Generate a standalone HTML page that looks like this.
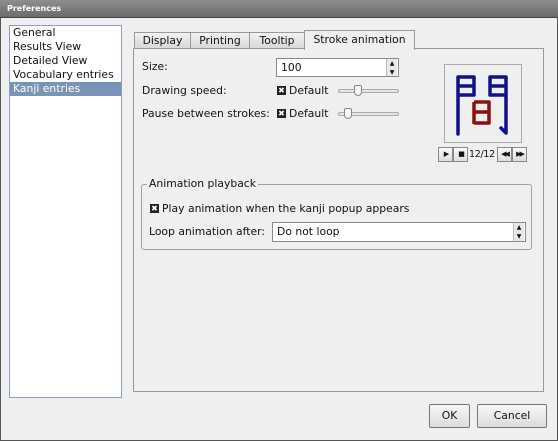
<!DOCTYPE html>
<html><head><style>
*{box-sizing:border-box;margin:0;padding:0}
body{width:558px;height:441px;background:#efefef;font-family:"DejaVu Sans","Liberation Sans",sans-serif;font-size:10.8px;color:#111;position:relative;overflow:hidden}
.a{position:absolute;white-space:nowrap}
.title{left:0;top:0;width:558px;height:18px;background:linear-gradient(#8e8e8e,#6b6b6b);color:#fff;font-weight:bold;font-size:8px;padding:4px 0 0 7px;border-bottom:1px solid #444}
.frame{left:0;top:0;width:558px;height:441px;border:1px solid #555}
.list{left:9px;top:25px;width:113px;height:373px;background:#fff;border:1px solid #8aa0bd}
.list div{height:14px;line-height:14px;padding-left:3px;font-size:10.8px}
.sel{background:#7a94b8;color:#fff}
.panel{left:133px;top:48px;width:411px;height:344px;border:1px solid #9a9a9a;background:#efefef}
.tab{top:32px;height:17px;border:1px solid #9a9a9a;background:linear-gradient(#f2f2f2,#d8d8d8);text-align:center;line-height:15px;font-size:10.8px}
.field{background:#fff;border:1px solid #8a8a8a;padding-left:4px;font-size:10.8px}
.chk{width:9px;height:9px;background:#222;color:#fff;font-size:8px;line-height:9px;text-align:center;font-weight:bold}
.spin{width:11px;border-left:1px solid #bbb;background:#e8e8e8;font-size:6px;text-align:center;line-height:9px}
.btn{border:1px solid #777;background:linear-gradient(#f7f7f7,#dcdcdc);border-radius:2px;text-align:center;font-size:10.8px}
.sb{width:15px;height:15px;border:1px solid #888;background:linear-gradient(#fafafa,#ddd);font-size:7px;text-align:center;line-height:13px;letter-spacing:-2px}
</style></head><body>
<div class="a frame"></div>
<div class="a title">Preferences</div>
<div class="a list"><div>General</div><div>Results View</div><div>Detailed View</div><div>Vocabulary entries</div><div class="sel">Kanji entries</div></div>
<div class="a panel"></div>
<div class="a tab" style="left:134px;width:57px">Display</div>
<div class="a tab" style="left:190px;width:60px">Printing</div>
<div class="a tab" style="left:249px;width:56px">Tooltip</div>
<div class="a tab" style="left:304px;top:30px;width:111px;height:20px;background:#efefef;border-bottom:none;line-height:18px">Stroke animation</div>
<div class="a" style="left:142px;top:60px">Size:</div>
<div class="a field" style="left:276px;top:58px;width:123px;height:19px;line-height:17px">100</div>
<div class="a spin" style="left:386px;top:59px;height:17px">▲<br>▼</div>
<div class="a" style="left:142px;top:84px">Drawing speed:</div>
<div class="a chk" style="left:277px;top:86px">✖</div>
<div class="a" style="left:289px;top:84px">Default</div>
<div class="a" style="left:338px;top:89px;width:61px;height:4px;border:1px solid #aaa;border-radius:2px;background:#e4e4e4"></div>
<div class="a" style="left:354px;top:85px;width:8px;height:11px;border:1px solid #888;border-radius:2px 2px 4px 4px;background:#f4f4f4"></div>
<div class="a" style="left:142px;top:107px">Pause between strokes:</div>
<div class="a chk" style="left:277px;top:109px">✖</div>
<div class="a" style="left:289px;top:107px">Default</div>
<div class="a" style="left:338px;top:112px;width:61px;height:4px;border:1px solid #aaa;border-radius:2px;background:#e4e4e4"></div>
<div class="a" style="left:344px;top:108px;width:8px;height:11px;border:1px solid #888;border-radius:2px 2px 4px 4px;background:#f4f4f4"></div>
<div class="a" style="left:444px;top:64px;width:78px;height:79px;border:1px solid #aaa;background:#efefef"></div>
<svg class="a" style="left:0;top:0" width="558" height="441">
<g fill="none" stroke="#10108a" stroke-width="3.5" stroke-linecap="round" stroke-linejoin="round">
<path d="M458 77V134M458 77H474V95H458M458 86H474"/>
<path d="M490 77H506V133L501 128M490 77V95H506M490 86H506"/>
</g>
<g fill="none" stroke="#8b1010" stroke-width="3.5" stroke-linejoin="round"><path d="M474 102V124M474 102H489V123H474M474 112H489"/></g>
</svg>
<div class="a sb" style="left:438px;top:147px">▶</div>
<div class="a sb" style="left:453px;top:147px">■</div>
<div class="a" style="left:469px;top:149px;font-size:9.5px;letter-spacing:-0.3px">12/12</div>
<div class="a sb" style="left:497px;top:147px">◀◀</div>
<div class="a sb" style="left:512px;top:147px">▶▶</div>
<div class="a" style="left:141px;top:184px;width:391px;height:66px;border:1px solid #a0a0a0;border-radius:3px"></div>
<div class="a" style="left:147px;top:177px;background:#efefef;padding:0 2px">Animation playback</div>
<div class="a chk" style="left:150px;top:204px">✖</div>
<div class="a" style="left:162px;top:202px">Play animation when the kanji popup appears</div>
<div class="a" style="left:149px;top:225px">Loop animation after:</div>
<div class="a field" style="left:272px;top:222px;width:254px;height:20px;line-height:18px">Do not loop</div>
<div class="a spin" style="left:513px;top:223px;height:18px">▲<br>▼</div>
<div class="a btn" style="left:429px;top:404px;width:41px;height:24px;line-height:22px">OK</div>
<div class="a btn" style="left:477px;top:404px;width:70px;height:24px;line-height:22px">Cancel</div>
</body></html>
